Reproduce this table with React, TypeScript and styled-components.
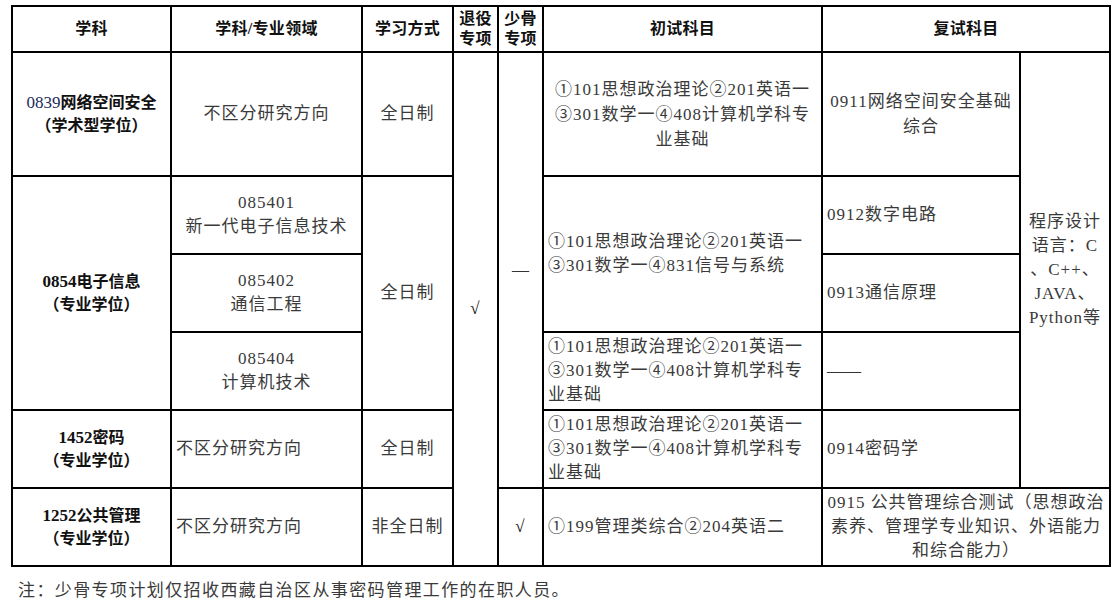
import React from "react";
import styled, { createGlobalStyle } from "styled-components";

const GlobalStyle = createGlobalStyle`
  html, body {
    margin: 0;
    padding: 0;
    background: #ffffff;
  }
  body {
    font-family: "Liberation Serif", "Noto Sans CJK SC", serif;
    color: #222;
  }
`;

const Page = styled.div`
  padding: 5px 0 0 11px;
  width: 1116px;
  box-sizing: border-box;
`;

const Table = styled.div`
  display: grid;
  grid-template-columns: 157px 189px 89px 43px 43px 277px 196px 88px;
  grid-template-rows: 44px 122px 76px 76px 76px 76px 76px;
  gap: 2px;
  padding: 2px;
  width: max-content;
  background: #000;
`;

type Place = {
  $c: number;
  $r: number;
  $cs?: number;
  $rs?: number;
  $left?: boolean;
  $lh?: number;
};

const Cell = styled.div<Place>`
  grid-column: ${(p) => p.$c} / span ${(p) => p.$cs ?? 1};
  grid-row: ${(p) => p.$r} / span ${(p) => p.$rs ?? 1};
  background: #fff;
  display: flex;
  flex-direction: column;
  justify-content: center;
  align-items: ${(p) => (p.$left ? "flex-start" : "center")};
  text-align: ${(p) => (p.$left ? "left" : "center")};
  padding: 0 ${(p) => (p.$left ? "4px" : "2px")};
  font-size: 17px;
  line-height: ${(p) => p.$lh ?? 24}px;
  letter-spacing: 1px;
  font-weight: 400;
  color: #3a3a3a;
  white-space: nowrap;
  overflow: hidden;
`;

const HeadCell = styled(Cell)`
  font-size: 16px;
  font-weight: 700;
  letter-spacing: 0.3px;
  line-height: 20px;
  color: #111;
`;

const SubjectCell = styled(Cell)`
  font-size: 16px;
  font-weight: 700;
  letter-spacing: 0;
  line-height: 23px;
  color: #111;
`;

const Code = styled.span<{ $navy?: boolean }>`
  font-weight: ${(p) => (p.$navy ? 400 : 700)};
  font-size: 17px;
  color: ${(p) => (p.$navy ? "#1c2b5a" : "inherit")};
`;

const Line = styled.span`
  display: block;
`;

const Mark = styled.span`
  font-size: 17px;
  color: #111;
`;

const Dash = styled.span`
  letter-spacing: 0;
  color: #333;
`;

const Note = styled.p`
  margin: 12px 0 0 7px;
  font-size: 17px;
  line-height: 24px;
  letter-spacing: 1.4px;
  color: #3a3a3a;
`;

const Lines = ({ items }: { items: string[] }) => (
  <>
    {items.map((t) => (
      <Line key={t}>{t}</Line>
    ))}
  </>
);

const exam408 = [
  "①101思想政治理论②201英语一",
  "③301数学一④408计算机学科专",
  "业基础",
];

export default function App() {
  return (
    <Page>
      <GlobalStyle />
      <Table>
        <HeadCell $c={1} $r={1}>学科</HeadCell>
        <HeadCell $c={2} $r={1}>学科/专业领域</HeadCell>
        <HeadCell $c={3} $r={1}>学习方式</HeadCell>
        <HeadCell $c={4} $r={1}>
          <Lines items={["退役", "专项"]} />
        </HeadCell>
        <HeadCell $c={5} $r={1}>
          <Lines items={["少骨", "专项"]} />
        </HeadCell>
        <HeadCell $c={6} $r={1}>初试科目</HeadCell>
        <HeadCell $c={7} $r={1} $cs={2}>复试科目</HeadCell>

        {/* 0839 */}
        <SubjectCell $c={1} $r={2}>
          <Line>
            <Code $navy>0839</Code>网络空间安全
          </Line>
          <Line>（学术型学位）</Line>
        </SubjectCell>
        <Cell $c={2} $r={2}>不区分研究方向</Cell>
        <Cell $c={3} $r={2}>全日制</Cell>
        <Cell $c={4} $r={2} $rs={6}>
          <Mark>√</Mark>
        </Cell>
        <Cell $c={5} $r={2} $rs={5}>
          <Dash>—</Dash>
        </Cell>
        <Cell $c={6} $r={2} $lh={25}>
          <Lines items={exam408} />
        </Cell>
        <Cell $c={7} $r={2} $lh={25}>
          <Lines items={["0911网络空间安全基础", "综合"]} />
        </Cell>
        <Cell $c={8} $r={2} $rs={5}>
          <Lines items={["程序设计", "语言：C", "、C++、", "JAVA、", "Python等"]} />
        </Cell>

        {/* 0854 */}
        <SubjectCell $c={1} $r={3} $rs={3}>
          <Line>
            <Code>0854</Code>电子信息
          </Line>
          <Line>（专业学位）</Line>
        </SubjectCell>
        <Cell $c={2} $r={3}>
          <Lines items={["085401", "新一代电子信息技术"]} />
        </Cell>
        <Cell $c={2} $r={4}>
          <Lines items={["085402", "通信工程"]} />
        </Cell>
        <Cell $c={2} $r={5}>
          <Lines items={["085404", "计算机技术"]} />
        </Cell>
        <Cell $c={3} $r={3} $rs={3}>全日制</Cell>
        <Cell $c={6} $r={3} $rs={2} $left>
          <Lines items={["①101思想政治理论②201英语一", "③301数学一④831信号与系统"]} />
        </Cell>
        <Cell $c={6} $r={5} $left>
          <Lines items={exam408} />
        </Cell>
        <Cell $c={7} $r={3} $left>0912数字电路</Cell>
        <Cell $c={7} $r={4} $left>0913通信原理</Cell>
        <Cell $c={7} $r={5} $left>
          <Dash>——</Dash>
        </Cell>

        {/* 1452 */}
        <SubjectCell $c={1} $r={6}>
          <Line>
            <Code>1452</Code>密码
          </Line>
          <Line>（专业学位）</Line>
        </SubjectCell>
        <Cell $c={2} $r={6} $left>不区分研究方向</Cell>
        <Cell $c={3} $r={6}>全日制</Cell>
        <Cell $c={6} $r={6} $left>
          <Lines items={exam408} />
        </Cell>
        <Cell $c={7} $r={6} $left>0914密码学</Cell>

        {/* 1252 */}
        <SubjectCell $c={1} $r={7}>
          <Line>
            <Code>1252</Code>公共管理
          </Line>
          <Line>（专业学位）</Line>
        </SubjectCell>
        <Cell $c={2} $r={7} $left>不区分研究方向</Cell>
        <Cell $c={3} $r={7}>非全日制</Cell>
        <Cell $c={5} $r={7}>
          <Mark>√</Mark>
        </Cell>
        <Cell $c={6} $r={7} $left>①199管理类综合②204英语二</Cell>
        <Cell $c={7} $r={7} $cs={2}>
          <Lines
            items={[
              "0915 公共管理综合测试（思想政治",
              "素养、管理学专业知识、外语能力",
              "和综合能力）",
            ]}
          />
        </Cell>
      </Table>
      <Note>注：少骨专项计划仅招收西藏自治区从事密码管理工作的在职人员。</Note>
    </Page>
  );
}
